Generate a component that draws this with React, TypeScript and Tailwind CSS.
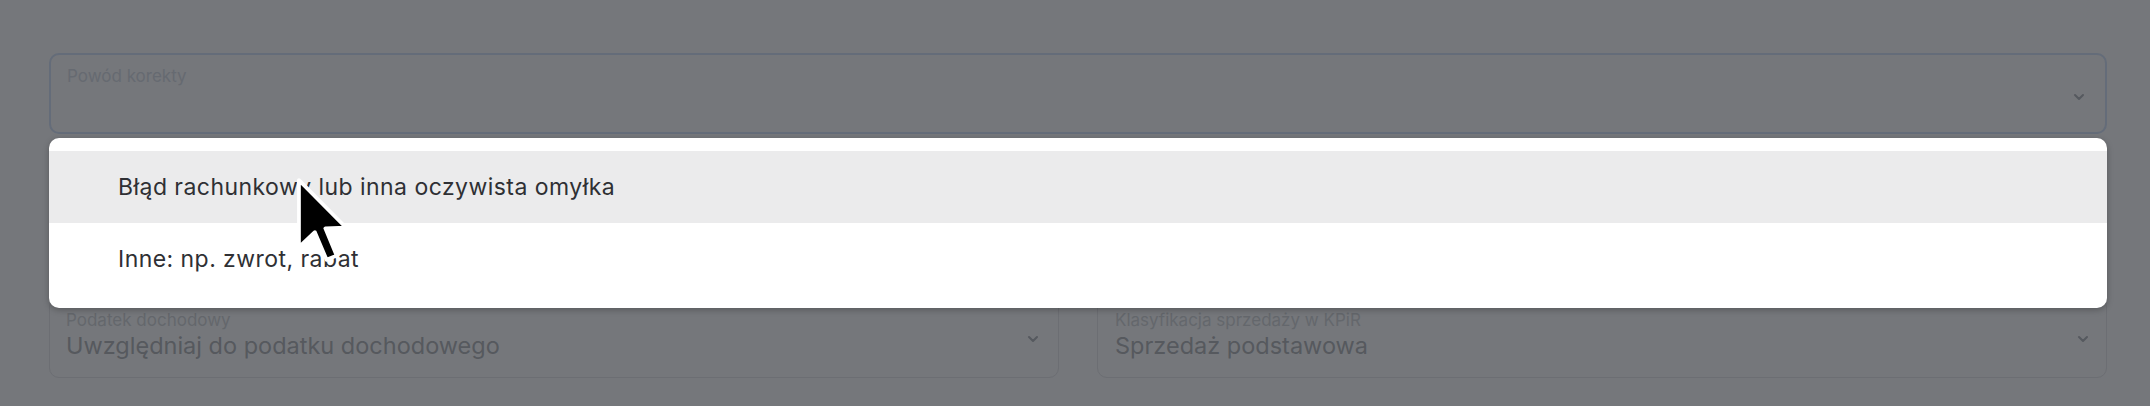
import React from 'react';

const Chevron = ({ className }: { className?: string }) => (
  <svg viewBox="0 0 12 8" className={className} fill="none" stroke="currentColor" strokeWidth="2" strokeLinecap="round" strokeLinejoin="round">
    <path d="M2 2l4 4 4-4" />
  </svg>
);

const Pointer = () => (
  <svg width="58" height="88" viewBox="-1 -1 13 21">
    <path
      d="M0 0 L0 16 L3.8 12.4 L6.6 19 L9 18 L6.3 11.5 L11.2 11.3 Z"
      fill="#000"
      stroke="#fff"
      strokeWidth="0.9"
      strokeLinejoin="round"
    />
  </svg>
);

const options = ['Błąd rachunkowy lub inna oczywista omyłka', 'Inne: np. zwrot, rabat'];

const App: React.FC = () => {
  return (
    <div className="relative h-[406px] w-full overflow-hidden bg-[#75777b] pl-[49px] pr-[43px] pt-[53px] font-['Inter',sans-serif]">
      <div className="relative">
        <div className="flex h-[81px] items-start justify-between rounded-[10px] border-2 border-[#646c79] pl-[16px] pr-[20px] pt-[10px]">
          <span className="text-[17px] leading-[22px] text-[#666a71]">Powód korekty</span>
          <Chevron className="mt-[28px] h-[8px] w-[12px] text-[#56595f]" />
        </div>

        {/* open menu */}
        <div className="absolute left-0 right-0 top-[85px] z-10 rounded-[10px] bg-white py-[13px] shadow-[0_2px_6px_rgba(0,0,0,0.25)]">
          {options.map((opt, i) => (
            <div
              key={opt}
              className={`flex h-[72px] items-center pl-[69px] text-[23px] tracking-[0.45px] text-[#2f3034] ${i === 0 ? 'bg-[#ebebec]' : ''}`}
            >
              {opt}
            </div>
          ))}
        </div>
      </div>

      <div className="mt-[163px] grid grid-cols-2 gap-[38px]">
        <div className="flex h-[81px] items-start justify-between rounded-[10px] border border-[#6c6e73] pl-[16px] pr-[19px] pt-[12px]">
          <div className="flex flex-col">
            <span className="text-[17px] leading-[20px] text-[#64676c]">Podatek dochodowy</span>
            <span className="mt-[1px] text-[23.5px] leading-[30px] text-[#56595e]">Uwzględniaj do podatku dochodowego</span>
          </div>
          <Chevron className="mt-[25px] h-[8px] w-[12px] text-[#56595f]" />
        </div>
        <div className="flex h-[81px] items-start justify-between rounded-[10px] border border-[#6c6e73] pl-[17px] pr-[17px] pt-[12px]">
          <div className="flex flex-col">
            <span className="text-[17px] leading-[20px] text-[#64676c]">Klasyfikacja sprzedaży w KPiR</span>
            <span className="mt-[1px] text-[23.5px] leading-[30px] text-[#56595e]">Sprzedaż podstawowa</span>
          </div>
          <Chevron className="mt-[25px] h-[8px] w-[12px] text-[#56595f]" />
        </div>
      </div>

      <div className="absolute left-[293px] top-[176px] z-20">
        <Pointer />
      </div>
    </div>
  );
};

export default App;
